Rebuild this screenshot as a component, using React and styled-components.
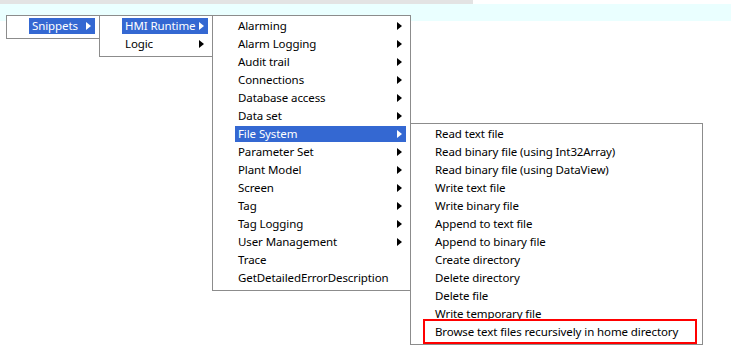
import React from "react";
import styled, { createGlobalStyle } from "styled-components";

const Global = createGlobalStyle`
  html, body { margin: 0; padding: 0; background: #ffffff; }
  body { width: 731px; height: 356px; overflow: hidden; font-family: "Noto Sans", "Segoe UI", sans-serif; }
`;

const Page = styled.div`
  position: relative;
  width: 731px;
  height: 356px;
  display: flex;
  flex-direction: column;
`;

const TopStrip = styled.div`
  width: 473px;
  height: 4px;
  background: #e3e3e3;
`;

const Band = styled.div`
  height: 17px;
  background: #eaffff;
`;

const Cascade = styled.div`
  position: absolute;
  left: 6px;
  top: 15px;
  display: flex;
  align-items: flex-start;
`;

const Menu = styled.div`
  position: relative;
  box-sizing: border-box;
  width: ${(p) => p.$w}px;
  margin-top: ${(p) => p.$top || 0}px;
  margin-left: ${(p) => (p.$first ? 0 : -1)}px;
  background: #ffffff;
  border: 1px solid #8c8c8c;
  padding: 1px 0 3px 0;
  display: flex;
  flex-direction: column;
`;

const Row = styled.div`
  position: relative;
  height: 18px;
  display: flex;
  align-items: center;
  padding: 0 4px 0 ${(p) => p.$indent}px;
`;

const Label = styled.div`
  flex: 1;
  height: 16px;
  display: flex;
  align-items: center;
  justify-content: space-between;
  padding: 0 4px 0 3px;
  font-size: 11.5px;
  letter-spacing: -0.1px;
  line-height: 16px;
  white-space: nowrap;
  color: ${(p) => (p.$active ? "#ffffff" : "#000000")};
  background: ${(p) => (p.$active ? "#3468d2" : "transparent")};
`;

const Arrow = styled.span`
  flex: none;
  width: 0;
  height: 0;
  border-top: 4px solid transparent;
  border-bottom: 4px solid transparent;
  border-left: 5px solid ${(p) => (p.$active ? "#ffffff" : "#000000")};
`;

const Marker = styled.div`
  position: absolute;
  left: 12px;
  top: -4px;
  width: 274px;
  height: 25px;
  box-sizing: border-box;
  border: 2px solid #ff0000;
  pointer-events: none;
`;

function Item({ label, arrow, active, indent = 22, marked }) {
  return (
    <Row $indent={indent}>
      <Label $active={active}>
        <span>{label}</span>
        {arrow && <Arrow $active={active} />}
      </Label>
      {marked && <Marker />}
    </Row>
  );
}

const runtime = [
  ["Alarming", true],
  ["Alarm Logging", true],
  ["Audit trail", true],
  ["Connections", true],
  ["Database access", true],
  ["Data set", true],
  ["File System", true, true],
  ["Parameter Set", true],
  ["Plant Model", true],
  ["Screen", true],
  ["Tag", true],
  ["Tag Logging", true],
  ["User Management", true],
  ["Trace", false],
  ["GetDetailedErrorDescription", false],
];

const files = [
  "Read text file",
  "Read binary file (using Int32Array)",
  "Read binary file (using DataView)",
  "Write text file",
  "Write binary file",
  "Append to text file",
  "Append to binary file",
  "Create directory",
  "Delete directory",
  "Delete file",
  "Write temporary file",
  "Browse text files recursively in home directory",
];

export default function App() {
  return (
    <>
      <Global />
      <Page>
        <TopStrip />
        <Band />
        <Cascade>
          <Menu $w={94} $first>
            <Item label="Snippets" arrow active />
          </Menu>
          <Menu $w={114}>
            <Item label="HMI Runtime" arrow active />
            <Item label="Logic" arrow />
          </Menu>
          <Menu $w={199}>
            {runtime.map(([l, a, act]) => (
              <Item key={l} label={l} arrow={a} active={act} />
            ))}
          </Menu>
          <Menu $w={293} $top={108}>
            {files.map((l, i) => (
              <Item key={l} label={l} indent={21} marked={i === files.length - 1} />
            ))}
          </Menu>
        </Cascade>
      </Page>
    </>
  );
}
